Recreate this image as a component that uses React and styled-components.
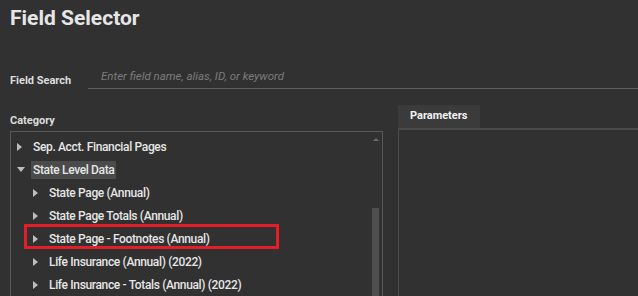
import styled, { createGlobalStyle } from 'styled-components';

const GlobalStyle = createGlobalStyle`
    html, body {
        margin: 0;
        padding: 0;
        background: #313131;
    }
    body {
        font-family: Roboto, "Liberation Sans", sans-serif;
        color: #e4e4e4;
        width: 638px;
        height: 296px;
        overflow: hidden;
    }
`;

const Page = styled.div`
    padding: 5px 0 0 10px;
    height: 296px;
    box-sizing: border-box;
    overflow: hidden;
`;
const Titre = styled.h1`
    margin: 0;
    font-size: 21px;
    font-weight: 700;
    line-height: 27px;
    color: #e6e6e6;
`;
const SearchRow = styled.div`
    display: flex;
    align-items: flex-end;
    margin-top: 37px;
`;
const Label = styled.span`
    font-size: 11px;
    font-weight: 700;
    color: #dcdcdc;
    width: 78px;
    line-height: 14px;
    padding-bottom: 1px;
`;
const SearchInput = styled.div`
    flex: 1;
    border-bottom: 1px solid #606060;
    padding: 0 0 5px 13px;
    font-size: 11.5px;
    font-style: italic;
    color: #7c7c7c;
    line-height: 14px;
`;
const Columns = styled.div`
    display: flex;
    align-items: flex-start;
    margin-top: 15px;
`;
const LeftCol = styled.div`
    width: 373px;
    padding-top: 10px;
`;
const CategoryLabel = styled.div`
    font-size: 11px;
    font-weight: 700;
    color: #dcdcdc;
    line-height: 14px;
    margin-bottom: 3px;
`;
const TreeBox = styled.div`
    position: relative;
    border: 1px solid #585858;
    border-bottom: none;
    height: 170px;
    padding-top: 3px;
    box-sizing: border-box;
`;
const Row = styled.div`
    display: flex;
    align-items: center;
    height: 23px;
    padding-left: ${(p) => 6 + p.$level * 16}px;
`;
const Fleche = styled.span`
    width: 0;
    height: 0;
    margin-right: ${(p) => (p.$open ? 6 : 9)}px;
    ${(p) =>
        p.$open
            ? `border-left: 4px solid transparent;
               border-right: 4px solid transparent;
               border-top: 5px solid #bdbdbd;`
            : `border-top: 4px solid transparent;
               border-bottom: 4px solid transparent;
               border-left: 5px solid #bdbdbd;`}
`;
const Libelle = styled.span`
    font-size: 12px;
    font-weight: 500;
    letter-spacing: -0.35px;
    color: #e6e6e6;
    padding: 2px 2px;
    background: ${(p) => (p.$selected ? '#4b4b4b' : 'transparent')};
    white-space: nowrap;
`;
const Encadre = styled.div`
    position: absolute;
    left: 13px;
    top: 92px;
    width: 249px;
    height: 19px;
    border: 3px solid #e41e26;
`;
const ScrollTrack = styled.div`
    position: absolute;
    right: 2px;
    top: 0;
    bottom: 0;
    width: 8px;
`;
const ScrollUp = styled.div`
    position: absolute;
    top: 6px;
    left: 1px;
    border-left: 3px solid transparent;
    border-right: 3px solid transparent;
    border-bottom: 3px solid #6a6a6a;
`;
const ScrollThumb = styled.div`
    position: absolute;
    top: 76px;
    bottom: 0;
    left: 0;
    width: 7px;
    background: #4f4f4f;
`;
const RightCol = styled.div`
    flex: 1;
    margin-left: 15px;
`;
const Onglet = styled.div`
    display: inline-block;
    background: #3b3b3b;
    font-size: 11px;
    font-weight: 700;
    color: #f2f2f2;
    padding: 4px 12px 5px 12px;
    line-height: 14px;
    width: 58px;
`;
const Panneau = styled.div`
    border-top: 2px solid #4a4a4a;
    border-left: 1px solid #4e4e4e;
    height: 170px;
`;

const items = [
    { level: 0, nom: 'Sep. Acct. Financial Pages' },
    { level: 0, nom: 'State Level Data', open: true, selected: true },
    { level: 1, nom: 'State Page (Annual)' },
    { level: 1, nom: 'State Page Totals (Annual)' },
    { level: 1, nom: 'State Page - Footnotes (Annual)' },
    { level: 1, nom: 'Life Insurance (Annual) (2022)' },
    { level: 1, nom: 'Life Insurance - Totals (Annual) (2022)' },
];

function App() {
    return (
        <>
            <GlobalStyle />
            <Page>
                <Titre>Field Selector</Titre>
                <SearchRow>
                    <Label>Field Search</Label>
                    <SearchInput>Enter field name, alias, ID, or keyword</SearchInput>
                </SearchRow>
                <Columns>
                    <LeftCol>
                        <CategoryLabel>Category</CategoryLabel>
                        <TreeBox>
                            {items.map((item, index) => (
                                <Row key={index} $level={item.level}>
                                    <Fleche $open={item.open} />
                                    <Libelle $selected={item.selected}>{item.nom}</Libelle>
                                </Row>
                            ))}
                            <Encadre />
                            <ScrollTrack>
                                <ScrollUp />
                                <ScrollThumb />
                            </ScrollTrack>
                        </TreeBox>
                    </LeftCol>
                    <RightCol>
                        <Onglet>Parameters</Onglet>
                        <Panneau />
                    </RightCol>
                </Columns>
            </Page>
        </>
    );
}

export default App;
